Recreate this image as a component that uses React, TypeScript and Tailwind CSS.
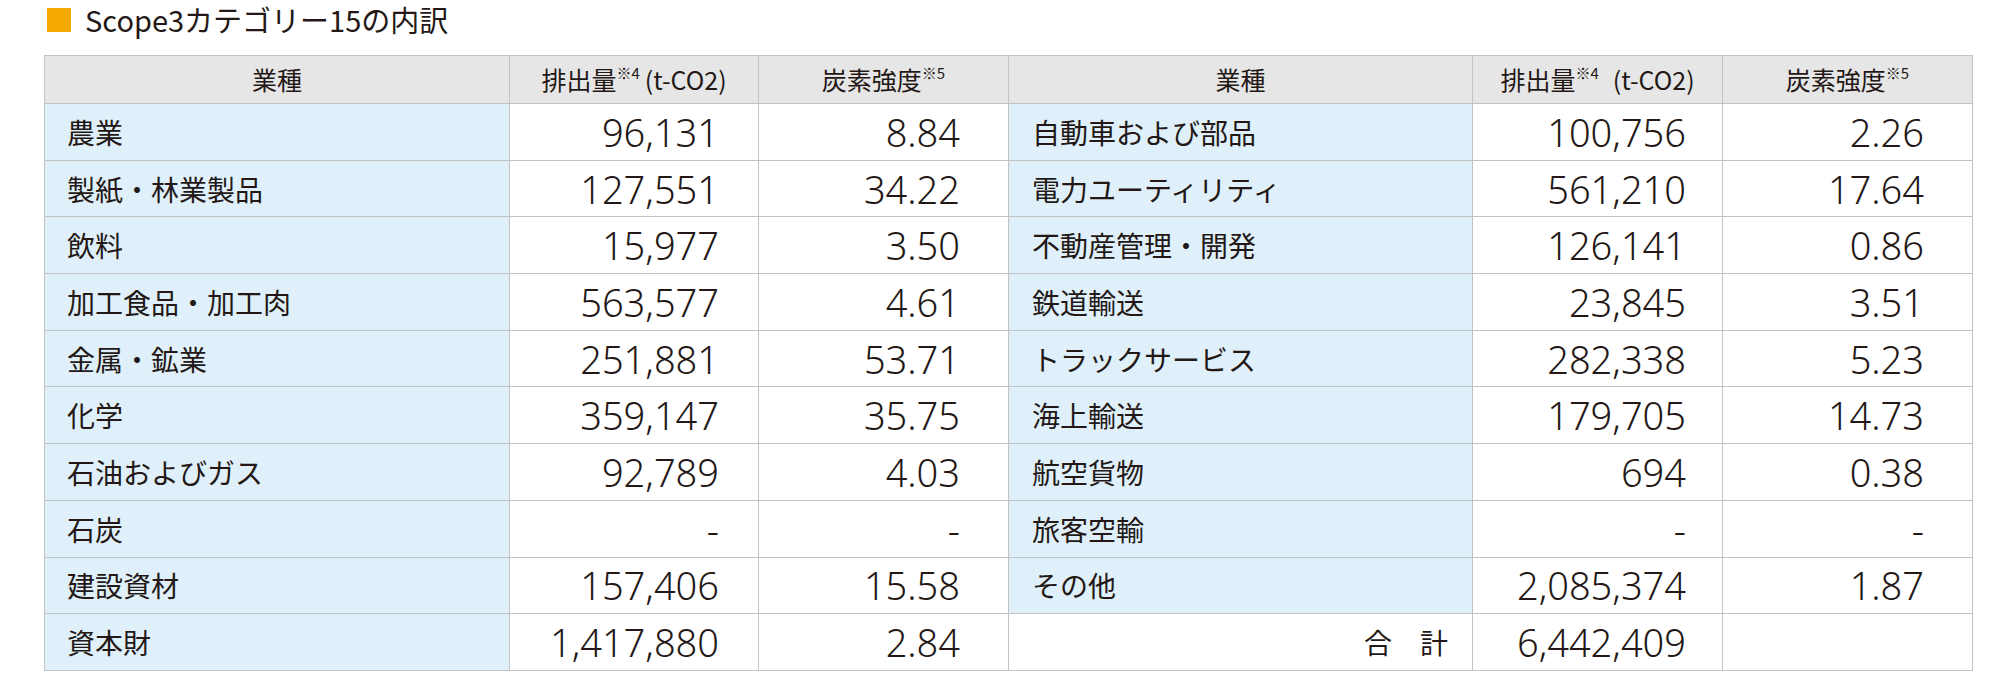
const left = [
	["農業", "96,131", "8.84"],
	["製紙・林業製品", "127,551", "34.22"],
	["飲料", "15,977", "3.50"],
	["加工食品・加工肉", "563,577", "4.61"],
	["金属・鉱業", "251,881", "53.71"],
	["化学", "359,147", "35.75"],
	["石油およびガス", "92,789", "4.03"],
	["石炭", "-", "-"],
	["建設資材", "157,406", "15.58"],
	["資本財", "1,417,880", "2.84"],
];

const right = [
	["自動車および部品", "100,756", "2.26"],
	["電力ユーティリティ", "561,210", "17.64"],
	["不動産管理・開発", "126,141", "0.86"],
	["鉄道輸送", "23,845", "3.51"],
	["トラックサービス", "282,338", "5.23"],
	["海上輸送", "179,705", "14.73"],
	["航空貨物", "694", "0.38"],
	["旅客空輸", "-", "-"],
	["その他", "2,085,374", "1.87"],
];

const jp = "font-['Noto_Sans_CJK_JP',sans-serif]";
const num = "font-['Noto_Sans','Noto_Sans_CJK_JP',sans-serif] font-light text-[38px] text-right leading-none";
const th = "border border-[#c3c3c3] font-normal text-[25px] text-center";

function HeaderCells({ wide }: { wide?: boolean }) {
	return (
		<>
			<th className={th}>業種</th>
			<th className={th}>
				排出量<sup className="text-[15px] top-[-0.7em]">※4</sup>
				<span className={wide ? "ml-[14px]" : "ml-[5px]"}>(t-CO2)</span>
			</th>
			<th className={th}>
				炭素強度<sup className="text-[15px] top-[-0.7em]">※5</sup>
			</th>
		</>
	);
}

export default function App() {
	return (
		<div className={`bg-white w-[2000px] h-[676px] text-[#231815] ${jp}`}>
			<div className="flex items-center h-[38px] pl-[47px] pt-[1px]">
				<span className="w-[24px] h-[24px] bg-[#f5a900]" />
				<span className="ml-[14px] text-[29px] leading-none">Scope3カテゴリー15の内訳</span>
			</div>

			<table className="ml-[44px] mt-[17px] border-collapse table-fixed w-[1928px]">
				<colgroup>
					<col className="w-[465px]" />
					<col className="w-[249px]" />
					<col className="w-[250px]" />
					<col className="w-[464px]" />
					<col className="w-[250px]" />
					<col className="w-[250px]" />
				</colgroup>
				<thead>
					<tr className="bg-[#e6e6e6] h-[48px]">
						<HeaderCells />
						<HeaderCells wide />
					</tr>
				</thead>
				<tbody>
					{left.map((l, i) => {
						const r = right[i];
						return (
							<tr key={i} className="h-[56.7px]">
								<td className="border border-[#c3c3c3] bg-[#dff0fa] text-[28px] pl-[22px]">{l[0]}</td>
								<td className={`border border-[#c3c3c3] pr-[39px] ${num}`}>{l[1]}</td>
								<td className={`border border-[#c3c3c3] pr-[48px] ${num}`}>{l[2]}</td>
								{r ? (
									<td className="border border-[#c3c3c3] bg-[#dff0fa] text-[28px] pl-[23px]">{r[0]}</td>
								) : (
									<td className="border border-[#c3c3c3] text-[28px] text-right pr-[24px]">合　計</td>
								)}
								<td className={`border border-[#c3c3c3] pr-[36px] ${num}`}>{r ? r[1] : "6,442,409"}</td>
								<td className={`border border-[#c3c3c3] pr-[48px] ${num}`}>{r ? r[2] : ""}</td>
							</tr>
						);
					})}
				</tbody>
			</table>
		</div>
	);
}
